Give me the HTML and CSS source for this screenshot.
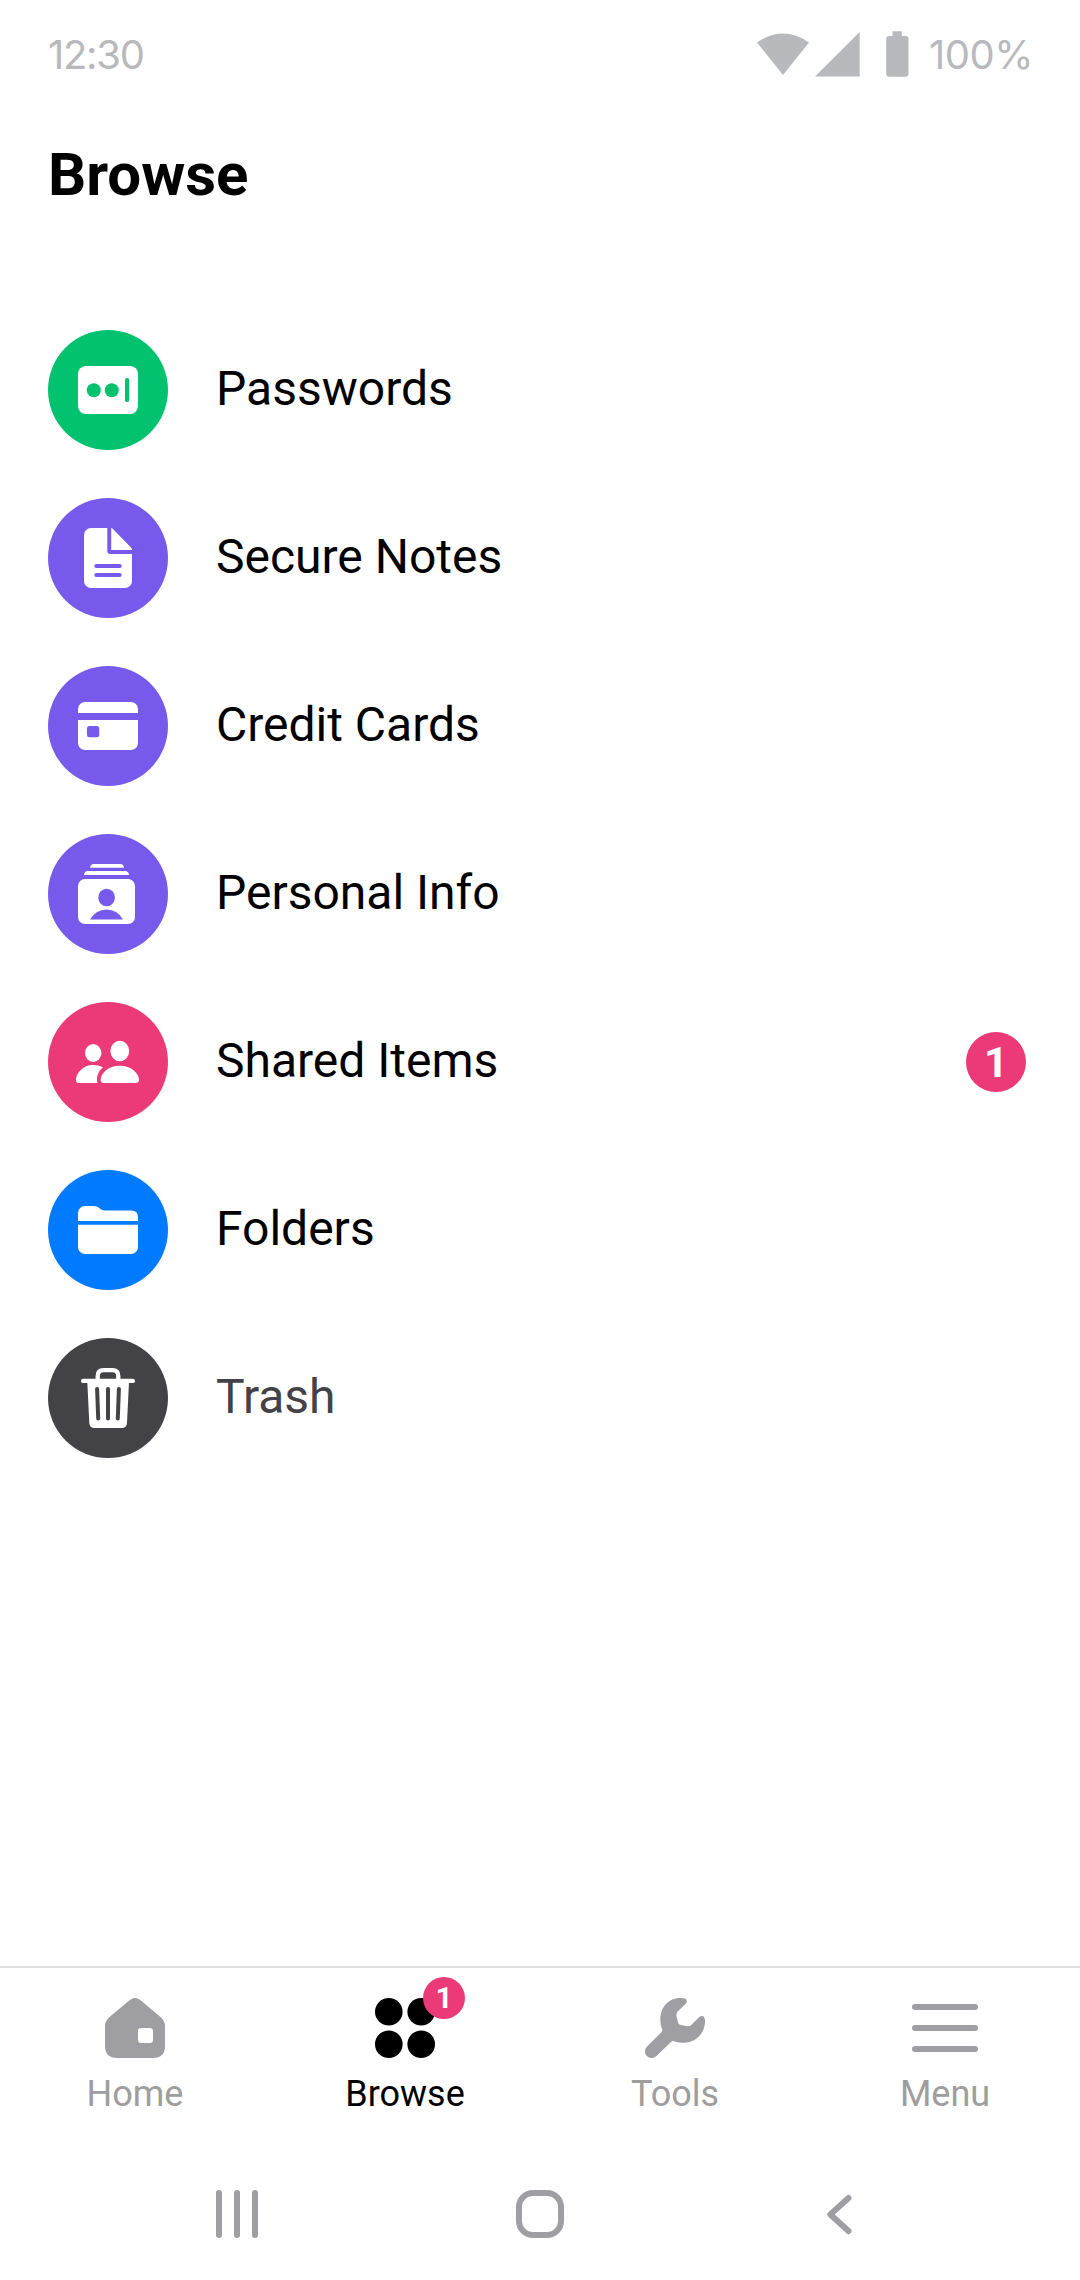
FILE: index.html
```html
<!DOCTYPE html>
<html lang="en">
<head>
<meta charset="utf-8">
<title>Browse</title>
<link rel="stylesheet" href="styles.css">
</head>
<body>
<div class="screen">
  <header class="status-bar">
    <span class="clock">12:30</span>
    <div class="status-right">
      <svg class="status-icons" width="152" height="46" viewBox="757 31 152 46" fill="currentColor">
        <path d="M757 42.5Q783 24.5 809 42.5L783 75Z"/>
        <path d="M815 76.5L859.7 32V76.5Z"/>
        <path d="M892.5 31.3h9.3v4.7h3.7a3 3 0 0 1 3 3v34.7a3 3 0 0 1-3 3h-16.3a3 3 0 0 1-3-3V39a3 3 0 0 1 3-3h3.3z"/>
      </svg>
      <span class="battery-level">100%</span>
    </div>
  </header>

  <h1 class="title">Browse</h1>

  <main class="list">
    <a class="item">
      <svg class="item-icon green" viewBox="0 0 120 120">
        <rect x="30" y="36" width="60" height="48" rx="8"/>
        <g fill="currentColor"><circle cx="45.8" cy="60.2" r="7"/><circle cx="63.8" cy="60.2" r="7"/><rect x="77" y="48" width="4.2" height="24" rx="1.8"/></g>
      </svg>
      <span class="item-label">Passwords</span>
    </a>
    <a class="item">
      <svg class="item-icon purple" viewBox="0 0 120 120">
        <path d="M59.3 30H43a7 7 0 0 0-7 7v46a7 7 0 0 0 7 7h34a7 7 0 0 0 7-7V56H62.3a3 3 0 0 1-3-3z"/>
        <path d="M63.2 30Q64 30 65.2 31.3L82.8 49.3Q84 50.5 84 52H63.2z"/>
        <g fill="currentColor"><rect x="46.3" y="66" width="27.4" height="4.1" rx="2"/><rect x="46.3" y="75" width="27.4" height="4.1" rx="2"/></g>
      </svg>
      <span class="item-label">Secure Notes</span>
    </a>
    <a class="item">
      <svg class="item-icon purple" viewBox="0 0 120 120">
        <path d="M30 47v-4a7 7 0 0 1 7-7h46a7 7 0 0 1 7 7v4z"/>
        <path d="M30 54h60v23a7 7 0 0 1-7 7H37a7 7 0 0 1-7-7z"/>
        <rect x="39" y="60" width="12.2" height="11.2" rx="2.5" fill="currentColor"/>
      </svg>
      <span class="item-label">Credit Cards</span>
    </a>
    <a class="item">
      <svg class="item-icon purple" viewBox="0 0 120 120">
        <path d="M42 33.8q.3-3.8 3.7-3.8h26.6q3.4 0 3.7 3.8z"/>
        <path d="M36 41q.3-4 4-4h37q3.7 0 4 4z"/>
        <rect x="30" y="45" width="57" height="45" rx="7"/>
        <g fill="currentColor"><ellipse cx="58.6" cy="63.5" rx="8.3" ry="8.8"/><path d="M42 85.6Q48 75.6 58.6 75.6T75 85.6z"/></g>
      </svg>
      <span class="item-label">Personal Info</span>
    </a>
    <a class="item">
      <svg class="item-icon pink" viewBox="0 0 120 120">
        <ellipse cx="45.2" cy="51" rx="8.2" ry="9"/>
        <ellipse cx="71.8" cy="49" rx="9.4" ry="10.3"/>
        <path d="M31 81q-3 0-3-3c0-7 7-15 17-15q5.500 0 10 2.300c-4.500 3.500-7.200 9.700-5.500 15.700z"/>
        <path d="M56 81q-3.400 0-3.400-3c0-6.500 7.400-14.300 19.200-14.300S91 71.500 91 78q0 3-3.400 3z"/>
      </svg>
      <span class="item-label">Shared Items</span>
      <span class="count">1</span>
    </a>
    <a class="item">
      <svg class="item-icon blue" viewBox="0 0 120 120">
        <path d="M30 51v-8a7 7 0 0 1 7-7h9q3 0 5 1.800l1.500 1.300q1.500 1.400 4 1.400H83.500Q90 40.500 90 47v4z"/>
        <path d="M30 54.700h60V77a7 7 0 0 1-7 7H37a7 7 0 0 1-7-7z"/>
      </svg>
      <span class="item-label">Folders</span>
    </a>
    <a class="item">
      <svg class="item-icon dark" viewBox="0 0 120 120">
        <path d="M49.700 42v-4q0-5.800 5.800-5.800h9q5.800 0 5.800 5.800v4" fill="none" stroke="#fff" stroke-width="4.300"/>
        <rect x="33" y="40.700" width="54" height="4.400" rx="2.200"/>
        <path d="M39.300 44h41.700l-2 41q-.3 5-5.300 5H46.500q-5 0-5.200-5z"/>
        <path d="M49.100 51l1.100 29.500M60 51v29.500M70.900 51l-1.100 29.500" fill="none" stroke="currentColor" stroke-width="4" stroke-linecap="round"/>
      </svg>
      <span class="item-label muted">Trash</span>
    </a>
  </main>

  <nav class="tabs">
    <a class="tab">
      <svg class="tab-icon" width="60" height="60" viewBox="0 0 60 60">
        <path fill-rule="evenodd" d="M26.500 1Q30 -1 33.500 1Q35 1.800 37 3.500L55.500 19Q60 23 60 28V48Q60 60 48 60H12Q0 60 0 48V28Q0 23 4.500 19L23 3.500Q25 1.800 26.500 1ZM36 30a3 3 0 0 0-3 3v9a3 3 0 0 0 3 3h9a3 3 0 0 0 3-3v-9a3 3 0 0 0-3-3z"/>
      </svg>
      <span class="tab-label">Home</span>
    </a>
    <a class="tab active">
      <span class="icon-wrap">
        <svg class="tab-icon" width="60" height="60" viewBox="0 0 60 60"><circle cx="13.800" cy="13.800" r="13.800"/><circle cx="46.200" cy="13.800" r="13.800"/><circle cx="13.800" cy="46.200" r="13.800"/><circle cx="46.200" cy="46.200" r="13.800"/></svg>
        <span class="tab-badge">1</span>
      </span>
      <span class="tab-label">Browse</span>
    </a>
    <a class="tab">
      <svg class="tab-icon" width="60" height="60" viewBox="0 0 60 60">
        <path d="M35 0Q38 -.1 40 .5Q43.300 2.500 41 5.500L32.700 13.500Q31 15.500 31.500 18L33 24.500Q33.300 26.300 35 26.700L42 28.200Q44.500 28.700 46.500 26.700L54 19.200Q56 17.200 58.300 18.300Q59.700 19.200 60 22C60.500 35 51 44.700 39 44.700Q33.500 44.700 29 43.200Q27.300 42.700 26 44L11.500 58Q9.500 60 6.500 60C3 60 0 57 0 53.500Q0 50.500 2 48.500L16.200 34.500Q17.700 33 17.200 31.200Q15.300 27 15.300 21.500C15.300 9 24 0 35 0Z"/>
      </svg>
      <span class="tab-label">Tools</span>
    </a>
    <a class="tab">
      <svg class="tab-icon" width="66" height="60" viewBox="0 0 66 60"><rect y="6" width="66" height="6" rx="3"/><rect y="27" width="66" height="6" rx="3"/><rect y="48" width="66" height="6" rx="3"/></svg>
      <span class="tab-label">Menu</span>
    </a>
  </nav>

  <footer class="system-nav">
    <svg width="42" height="48" viewBox="0 0 42 48" fill="currentColor"><rect width="6" height="48" rx="3"/><rect x="18" width="6" height="48" rx="3"/><rect x="36" width="6" height="48" rx="3"/></svg>
    <svg width="48" height="48" viewBox="0 0 48 48" fill="none" stroke="currentColor" stroke-width="6"><rect x="3" y="3" width="42" height="42" rx="14"/></svg>
    <svg width="30" height="48" viewBox="0 0 30 48" fill="none" stroke="currentColor" stroke-width="6" stroke-linecap="round" stroke-linejoin="round"><path d="M26.500 8L8.300 24.500L26.500 41"/></svg>
  </footer>
</div>
</body>
</html>
```
FILE: styles.css
```css
* { box-sizing: border-box; }

body {
  margin: 0;
  background: #fff;
  color: #000;
  font-family: Roboto, "Liberation Sans", sans-serif;
}

.screen {
  width: 1080px;
  height: 2280px;
  display: flex;
  flex-direction: column;
  overflow: hidden;
}

.status-bar {
  height: 110px;
  padding: 0 47px 0 48px;
  display: flex;
  justify-content: space-between;
  align-items: center;
  color: #b8b9bd;
  font-family: Inter, Roboto, sans-serif;
  font-size: 40px;
  line-height: 48px;
}

.status-right {
  display: flex;
  align-items: center;
  gap: 20px;
}

.status-icons { margin-bottom: 2px; }

.clock { letter-spacing: -1.3px; }
.battery-level { letter-spacing: -0.5px; }

.title {
  margin: 30px 0 0 48px;
  font-size: 60px;
  line-height: 70px;
  font-weight: 700;
}

.list {
  margin-top: 120px;
  padding: 0 54px 0 48px;
  display: flex;
  flex-direction: column;
  gap: 48px;
}

.item {
  height: 120px;
  display: flex;
  align-items: center;
  gap: 48px;
}

.item-icon {
  width: 120px;
  height: 120px;
  border-radius: 50%;
  fill: #fff;
  background: currentColor;
}

.green { color: #03c26f; }
.purple { color: #7759eb; }
.pink { color: #ec3a78; }
.blue { color: #007aff; }
.dark { color: #434247; }

.item-label {
  flex: 1;
  font-size: 48px;
  line-height: 56px;
  padding-bottom: 3px;
}

.muted { color: #434247; }

.count,
.tab-badge {
  display: flex;
  align-items: center;
  justify-content: center;
  border-radius: 50%;
  background: #ec3a78;
  color: #fff;
  font-weight: 700;
}

.count {
  width: 60px;
  height: 60px;
  font-size: 42px;
}

.tabs {
  margin-top: auto;
  height: 198px;
  border-top: 2px solid #e0e0e0;
  display: flex;
}

.tab {
  flex: 1;
  display: flex;
  flex-direction: column;
  align-items: center;
  padding-top: 30px;
  color: #9e9e9e;
}

.tab-icon {
  display: block;
  fill: #9f9ea3;
}

.active { color: #000; }
.active .tab-icon { fill: #000; }

.icon-wrap { position: relative; }

.tab-badge {
  position: absolute;
  left: 48px;
  top: -21px;
  width: 42px;
  height: 42px;
  padding-bottom: 2px;
  font-size: 30px;
}

.tab-label {
  margin-top: 15px;
  font-size: 36px;
  line-height: 42px;
}

.system-nav {
  height: 116px;
  padding: 26px 228px 0 216px;
  display: flex;
  align-items: flex-start;
  justify-content: space-between;
  color: #9f9ea3;
}
```
